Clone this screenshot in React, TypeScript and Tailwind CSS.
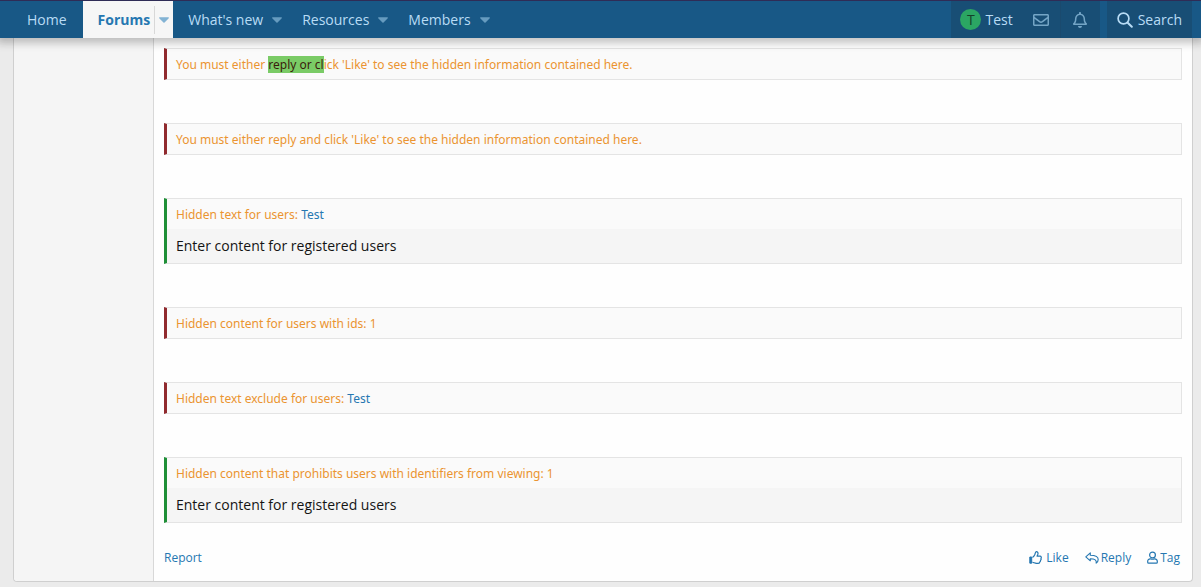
import React from 'react';
import { FaRegBell, FaRegEnvelope } from 'react-icons/fa';

interface NavItem {
  label: string;
  active?: boolean;
  menu?: boolean;
}

interface HiddenBlock {
  allowed: boolean;
  title: React.ReactNode;
  content?: string;
}

const NAV_ITEMS: NavItem[] = [
  { label: 'Home' },
  { label: 'Forums', active: true, menu: true },
  { label: "What's new", menu: true },
  { label: 'Resources', menu: true },
  { label: 'Members', menu: true },
];

const UserLink = () => (
  <a href="#test" className="text-[#2577b1]">Test</a>
);

const BLOCKS: HiddenBlock[] = [
  {
    allowed: false,
    title: (
      <>
        You must either <mark className="bg-[#7acb66] text-[#3c1c0c]">reply or cl</mark>ick 'Like' to see the hidden information contained here.
      </>
    ),
  },
  { allowed: false, title: "You must either reply and click 'Like' to see the hidden information contained here." },
  { allowed: true, title: <>Hidden text for users: <UserLink /></>, content: 'Enter content for registered users' },
  { allowed: false, title: 'Hidden content for users with ids: 1' },
  { allowed: false, title: <>Hidden text exclude for users: <UserLink /></> },
  {
    allowed: true,
    title: 'Hidden content that prohibits users with identifiers from viewing: 1',
    content: 'Enter content for registered users',
  },
];

const Caret = () => (
  <svg className="h-[6px] w-[10px]" viewBox="0 0 9 5" fill="currentColor" aria-hidden="true">
    <path d="M0.6 0h7.8c.5 0 .7.6.4.9L5 4.8a.7.7 0 0 1-1 0L.2.9C-.1.6.1 0 .6 0z" />
  </svg>
);

const SearchIcon = () => (
  <svg className="size-4" viewBox="0 0 16 16" fill="none" stroke="currentColor" strokeWidth="1.7" aria-hidden="true">
    <circle cx="6.5" cy="6.5" r="5.4" />
    <path strokeLinecap="round" strokeWidth="2" d="M10.7 10.7l4.1 4.1" />
  </svg>
);

const LikeIcon = () => (
  <svg className="size-[13px]" viewBox="0 0 13 13" fill="none" stroke="currentColor" strokeWidth="1.2" strokeLinejoin="round" aria-hidden="true">
    <path fill="currentColor" strokeWidth="1" d="M.8 6h1.9v6.2H.8z" />
    <path d="M3.5 6.4C4.8 5.5 5.7 4.3 6 3.2C6.2 2.3 6.3.7 7.3.7C8.7.7 9.1 1.8 9 2.8C8.9 3.7 8.4 4.4 8.1 5.1H11C12.2 5.1 12.7 6.5 11.9 7.3C12.3 8.1 12.1 8.9 11.5 9.3C11.6 10.1 11.3 10.7 10.8 10.9C10.8 11.8 10.1 12.3 9.2 12.3H7.4C5.7 12.3 4.9 11.4 3.5 11.3" />
  </svg>
);

const ReplyIcon = () => (
  <svg className="h-3 w-[14px]" viewBox="0 0 14 12" fill="none" stroke="currentColor" strokeWidth="1.1" strokeLinejoin="round" aria-hidden="true">
    <path d="M.8 4.8L5.3.9V3.2C9.9 3.2 13.2 4.2 13.2 7.5C13.2 9 12.4 10.3 11.2 11.1C11.7 8.3 10 6.7 5.3 6.7V8.8z" />
  </svg>
);

const TagIcon = () => (
  <svg className="h-[13px] w-[11px]" viewBox="0 0 11 13" fill="none" stroke="currentColor" strokeWidth="1.2" strokeLinejoin="round" aria-hidden="true">
    <circle cx="5.5" cy="4" r="2.9" />
    <path d="M3.4 7.8C1.5 7.8.7 9 .7 10.3V11.2C.7 11.8 1.1 12.1 1.6 12.1H9.4C9.9 12.1 10.3 11.8 10.3 11.2V10.3C10.3 9 9.5 7.8 7.6 7.8C6.2 8.4 4.8 8.4 3.4 7.8z" />
  </svg>
);

const Header = () => (
  <header className="relative z-10 flex h-[38px] justify-between border-t border-[#2f2c56] bg-[#185886] pl-3 pr-[9px] text-sm text-[#b8dcf5] shadow-[0_2px_8px_3px_rgba(20,20,20,0.25)]">
    <nav className="flex">
      {NAV_ITEMS.map((item) => (
        <div
          key={item.label}
          className={`flex items-center ${item.active ? 'bg-[#f6f6f6] font-bold text-[#2577b1]' : ''}`}
        >
          <a href="#nav" className={item.menu ? 'pl-[15px]' : 'pl-[15px] pr-4'}>{item.label}</a>
          {item.menu && (
            <button
              type="button"
              aria-label={`${item.label} menu`}
              className={
                item.active
                  ? 'ml-1 flex h-7 items-center border-l border-[#d8d8d8] px-1 text-[#83b3d4]'
                  : 'flex h-7 items-center pl-[9px] pr-[5px] text-[#669bbf]'
              }
            >
              <Caret />
            </button>
          )}
        </div>
      ))}
    </nav>

    <div className="flex gap-[7px]">
      <div className="flex bg-[#184e75]">
        <a href="#account" className="flex items-center gap-1 px-[9px]">
          <span className="flex size-[21px] items-center justify-center rounded-full bg-[#2ba663] text-[#14402a]">T</span>
          Test
        </a>
        <button type="button" aria-label="Conversations" className="flex w-[39px] items-center justify-center border-r border-[#1a4a6e] text-[#74a5c6]">
          <FaRegEnvelope className="size-4" />
        </button>
        <button type="button" aria-label="Alerts" className="flex w-[39px] items-center justify-center text-[#74a5c6]">
          <FaRegBell className="size-4" />
        </button>
      </div>
      <button type="button" className="flex items-center gap-[5px] bg-[#184e75] px-[10px]">
        <SearchIcon />
        Search
      </button>
    </div>
  </header>
);

const App: React.FC = () => {
  return (
    <div className="min-h-screen bg-[#ebebeb] pb-[5px] font-['Open_Sans','Noto_Sans',sans-serif] text-[#141414]">
      <Header />

      <main className="ml-[13px] mr-2 flex rounded-b border border-t-0 border-[#cfcfcf] bg-[#fefefe]">
        <aside className="w-[140px] shrink-0 rounded-bl border-r border-[#d8d8d8] bg-[#f5f5f5]"></aside>

        <article className="flex-1 px-[10px] pt-[10px] text-xs">
          <div className="flex flex-col gap-[43px]">
            {BLOCKS.map((block, i) => (
              <section
                key={i}
                className={`border border-l-[3px] border-[#e4e4e4] bg-[#fafafa] ${
                  block.allowed ? 'border-l-[#1f8f37]' : 'border-l-[#902a2e]'
                }`}
              >
                <div className="px-[9px] pb-1 pt-[5px] font-['Noto_Sans',sans-serif] leading-[21px] text-[#eb9430]">{block.title}</div>
                {block.content && (
                  <div className="bg-[#f5f5f5] px-[9px] pb-[7px] pt-[6px] text-sm leading-[21px]">{block.content}</div>
                )}
              </section>
            ))}
          </div>

          <footer className="flex justify-between pb-[13px] pt-6 leading-[21px] text-[#2577b1]">
            <a href="#report">Report</a>
            <div className="flex gap-4 pr-0.5">
              <button type="button" className="flex items-center gap-1"><LikeIcon />Like</button>
              <button type="button" className="flex items-center gap-0.5"><ReplyIcon />Reply</button>
              <button type="button" className="flex items-center gap-0.5"><TagIcon />Tag</button>
            </div>
          </footer>
        </article>
      </main>
    </div>
  );
};

export default App;
